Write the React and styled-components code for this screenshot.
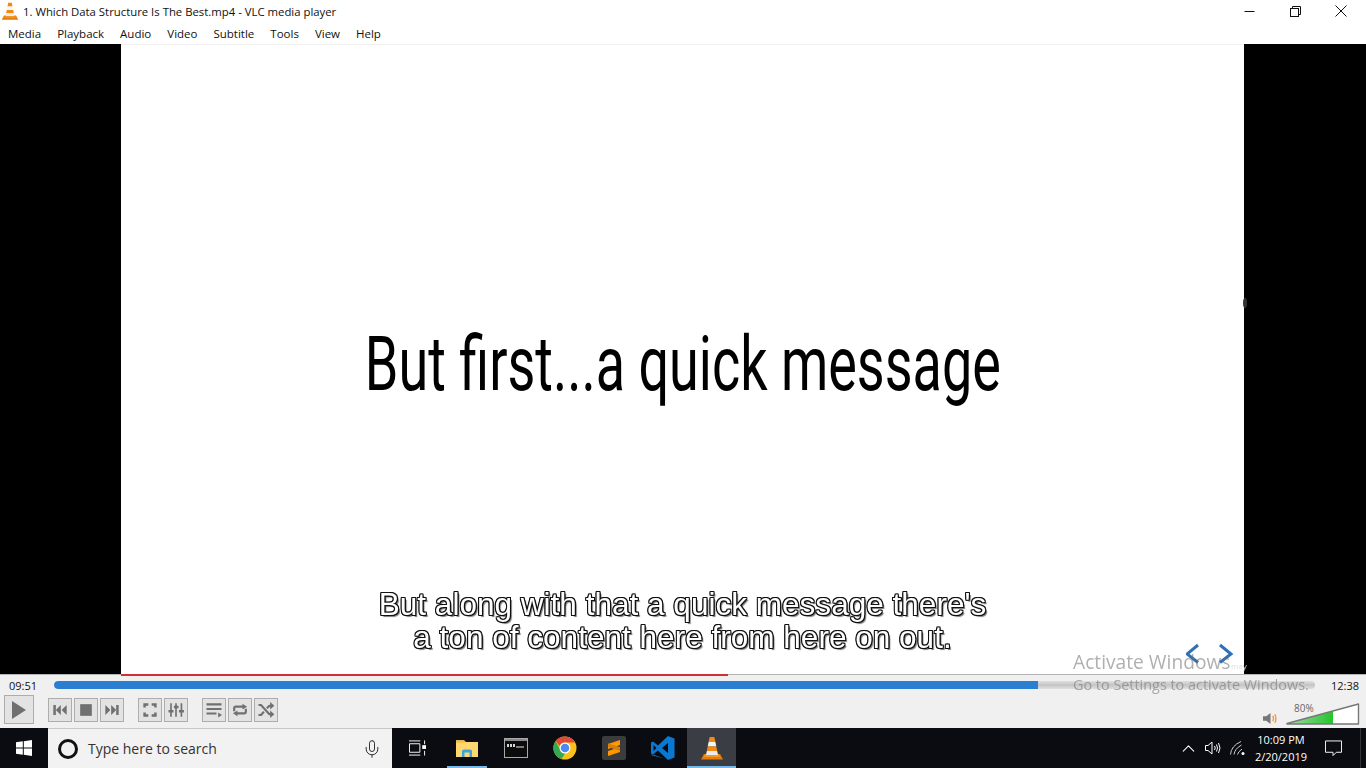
import React from 'react'
import styled, { createGlobalStyle } from 'styled-components'
import { ChevronUp, Mic } from 'lucide-react'

const UI_FONT = '"Open Sans", "Noto Sans", "Liberation Sans", sans-serif'

const GlobalStyle = createGlobalStyle`
  html, body {
    margin: 0;
    padding: 0;
    overflow: hidden;
    background: #000;
  }
  * {
    box-sizing: border-box;
  }
`

const menus = ['Media', 'Playback', 'Audio', 'Video', 'Subtitle', 'Tools', 'View', 'Help']

const Cone = ({ size = 16 }) => (
  <svg width={size} height={size} viewBox="0 0 24 24">
    <path d="M1 23.5 L4 18 H20 L23 23.5 Z" fill="#e57c0c" />
    <path d="M9.6 1 H14.4 L15.4 6 H8.6 Z" fill="#f08a10" />
    <path d="M8.6 6 H15.4 L16.3 10.5 H7.7 Z" fill="#f4f4f4" />
    <path d="M7.7 10.5 H16.3 L17.2 15 H6.8 Z" fill="#f08a10" />
    <path d="M6.8 15 H17.2 L18 19 H6 Z" fill="#ececec" />
    <path d="M5 19 H19 L20 21 H4 Z" fill="#f59a1e" />
  </svg>
)

const TopBars = () => (
  <>
    <TitleBar>
      <TitleIcon>
        <Cone size={18} />
      </TitleIcon>
      <TitleText>1. Which Data Structure Is The Best.mp4 - VLC media player</TitleText>
      <Captions>
        <CaptionButton>
          <svg width="11" height="11" viewBox="0 0 11 11">
            <path d="M0.5 5.5 H10.5" stroke="#111" fill="none" />
          </svg>
        </CaptionButton>
        <CaptionButton>
          <svg width="11" height="11" viewBox="0 0 11 11">
            <path d="M2.5 2.5 V0.5 H10.5 V8.5 H8.5" stroke="#111" fill="none" />
            <rect x="0.5" y="2.5" width="8" height="8" stroke="#111" fill="#fff" />
          </svg>
        </CaptionButton>
        <CaptionButton>
          <svg width="12" height="12" viewBox="0 0 12 12">
            <path d="M0.5 0.5 L11.5 11.5 M11.5 0.5 L0.5 11.5" stroke="#111" fill="none" />
          </svg>
        </CaptionButton>
      </Captions>
    </TitleBar>
    <MenuBar>
      {menus.map((m) => (
        <MenuItem key={m}>{m}</MenuItem>
      ))}
    </MenuBar>
  </>
)

const Video = () => (
  <VideoArea>
    <Frame>
      <Heading>
        <span>But first...a quick message</span>
      </Heading>
      <Subtitle>
        But along with that a quick message there's
        <br />
        a ton of content here from here on out.
      </Subtitle>
      <SlideArrows width="56" height="24" viewBox="0 0 56 24">
        <path d="M12 2 L1 11 L12 19.5" />
        <path d="M34 2 L45 11 L34 19.5" />
      </SlideArrows>
      <FaintLogo>may</FaintLogo>
      <EdgeNotch />
      <RedLine $to={607} />
    </Frame>
  </VideoArea>
)

const Stroked = styled.g`
  fill: none;
  stroke: #707070;
  stroke-width: 2.6;
`

const icons = {
  prev: <path d="M4 6 H7 V18 H4 Z M13 6 V18 L7 12 Z M20 6 V18 L14 12 Z" />,
  stop: <rect x="5" y="5" width="14" height="14" />,
  next: <path d="M20 6 H17 V18 H20 Z M11 6 V18 L17 12 Z M4 6 V18 L10 12 Z" />,
  full: (
    <path d="M4 4 H10 V7 H7 V9 H4 Z M20 4 H14 V7 H17 V9 H20 Z M4 20 H10 V17 H7 V15 H4 Z M20 20 H14 V17 H17 V15 H20 Z" />
  ),
  ext: (
    <path d="M5 4 H7 V12 H9 V15 H7 V20 H5 V15 H3 V12 H5 Z M11 4 H13 V7 H15 V10 H13 V20 H11 V10 H9.5 V7 H11 Z M17.5 4 H19.5 V12 H21.5 V15 H19.5 V20 H17.5 V15 H15.5 V12 H17.5 Z" />
  ),
  list: (
    <path d="M3 4 H21 V6.5 H3 Z M3 9.5 H21 V12 H3 Z M3 15 H15 V17.5 H3 Z M17 15 L21.5 18 L17 21 Z" />
  ),
  loop: (
    <>
      <Stroked>
        <path d="M5 13.5 V10 Q5 8 7 8 H16 M19 10.5 V14 Q19 16 17 16 H8" />
      </Stroked>
      <path d="M15 4.5 L20.5 8 L15 11.5 Z M9 12.5 L3.5 16 L9 19.5 Z" />
    </>
  ),
  random: (
    <>
      <Stroked>
        <path d="M3 6 H6 L16 17 H18 M3 18 H6 L9.5 14 M13 10 L16 7 H18" />
      </Stroked>
      <path d="M17 2.5 L22 7 L17 11.5 Z M17 12.5 L22 17 L17 21.5 Z" />
    </>
  ),
}

const Control = ({ icon }) => (
  <SmallButton>
    <svg width="20" height="20" viewBox="0 0 24 24">
      {icons[icon]}
    </svg>
  </SmallButton>
)

const Controls = () => (
  <ControlPanel>
    <SeekRow>
      <Time>09:51</Time>
      <SeekTrack>
        <SeekFill $pct={78.05} />
      </SeekTrack>
      <EndTime>12:38</EndTime>
    </SeekRow>
    <ButtonRow>
      <PlayButton>
        <svg width="18" height="20" viewBox="0 0 18 20">
          <path d="M2 1 L16 10 L2 19 Z" />
        </svg>
      </PlayButton>
      <ButtonGroup>
        <Control icon="prev" />
        <Control icon="stop" />
        <Control icon="next" />
      </ButtonGroup>
      <ButtonGroup>
        <Control icon="full" />
        <Control icon="ext" />
      </ButtonGroup>
      <ButtonGroup>
        <Control icon="list" />
        <Control icon="loop" />
        <Control icon="random" />
      </ButtonGroup>
      <Volume>
        <svg width="14" height="13" viewBox="0 0 13 12">
          <path d="M0 4 H3 L7 1 V11 L3 8 H0 Z" fill="#777" />
          <path d="M9 3.5 Q10.5 6 9 8.5 M11 2 Q13 6 11 10" stroke="#f0932b" fill="none" strokeWidth="1.2" />
        </svg>
        <VolumeMeter>
          <VolumeLabel>80%</VolumeLabel>
          <svg width="74" height="22" viewBox="0 0 74 22">
            <defs>
              <linearGradient id="vol" x1="0" x2="1" y1="0" y2="0">
                <stop offset="0" stopColor="#a6dca8" />
                <stop offset="1" stopColor="#22c52c" />
              </linearGradient>
            </defs>
            <path d="M1 20.5 L72.5 1 V21 H1 Z" fill="#fff" />
            <path d="M1 20.5 L47 8.2 V21 H1 Z" fill="url(#vol)" />
            <path d="M1 20.5 L72.5 1 V21 H1 Z" fill="none" stroke="#777" strokeWidth="1.4" strokeLinejoin="round" />
          </svg>
        </VolumeMeter>
      </Volume>
    </ButtonRow>
  </ControlPanel>
)

const FolderIcon = () => (
  <svg width="22" height="22" viewBox="0 0 22 22">
    <path d="M0 3 H8 L10 5 H0 Z" fill="#e3b34c" />
    <rect x="0" y="5" width="22" height="15" fill="#ffd76e" />
    <rect x="0" y="4.4" width="9" height="1.6" fill="#f6c654" />
    <path d="M6 20 V14 Q6 12.5 8 12.5 H14 Q16 12.5 16 14 V20 H13.5 V15.5 H8.5 V20 Z" fill="#3aa6e0" />
  </svg>
)

const ConsoleIcon = () => (
  <svg width="24" height="20" viewBox="0 0 24 20">
    <rect x="0.5" y="0.5" width="23" height="19" fill="#0c0c0c" stroke="#a9a9a9" />
    <rect x="1" y="1" width="22" height="2" fill="#8c8c8c" />
    <path d="M3 6 H5 V9 H3 Z M6 6 H8 V9 H6 Z M9 6 H11 V9 H9 Z" fill="#d4d4d4" />
    <rect x="12" y="8.5" width="8" height="1" fill="#e6e6e6" />
  </svg>
)

const ChromeIcon = () => (
  <svg width="24" height="24" viewBox="0 0 48 48">
    <circle cx="24" cy="24" r="23" fill="#fbc117" />
    <path d="M24 1 A23 23 0 0 1 44 13 L24 13 A11 11 0 0 0 13.5 20 L5 10 A23 23 0 0 1 24 1 Z" fill="#dd4b3e" />
    <path d="M5 10 L15 28 A11 11 0 0 0 24 35 L17 46 A23 23 0 0 1 5 10 Z" fill="#35a853" />
    <circle cx="24" cy="24" r="11" fill="#fff" />
    <circle cx="24" cy="24" r="8.5" fill="#4a8af4" />
  </svg>
)

const SublimeIcon = () => (
  <SublimeTile>
    <svg width="14" height="18" viewBox="0 0 14 18">
      <path d="M13 1 V6 L1 10 V5 Z M1 12 V17 L13 13 V8 Z" fill="#ff9800" />
      <path d="M1 8 L13 12 V8 L1 4.5 Z" fill="#d97f00" />
    </svg>
  </SublimeTile>
)

const CodeIcon = () => (
  <svg width="25" height="26" viewBox="0 0 25 26">
    <path
      fillRule="evenodd"
      d="M18 1 L24.5 3.5 V22.5 L18 25 L8 15.5 L3 19.5 L1 18.5 V7.5 L3 6.5 L8 10.5 Z M18 8 L12 13 L18 18 Z M3.5 10 V16 L6.5 13 Z"
      fill="#0a78d1"
    />
    <path d="M0.5 20 L3 19.5 L18 25 L14 23.5 Z" fill="#0a78d1" />
  </svg>
)

const Taskbar = () => (
  <TaskbarRoot>
    <StartButton>
      <svg width="16" height="16" viewBox="0 0 16 16">
        <path d="M0 2.3 L6.8 1.3 V7.5 H0 Z M7.8 1.2 L16 0 V7.5 H7.8 Z M0 8.5 H6.8 V14.7 L0 13.7 Z M7.8 8.5 H16 V16 L7.8 14.8 Z" fill="#fff" />
      </svg>
    </StartButton>
    <SearchBox>
      <CortanaRing />
      <SearchText>Type here to search</SearchText>
      <MicSlot>
        <Mic size={20} strokeWidth={1.1} color="#222" />
      </MicSlot>
    </SearchBox>
    <TaskView>
      <svg width="17" height="16" viewBox="0 0 18 16">
        <path d="M0.5 3.5 H11.5 V12.5 H0.5 Z M0 0.5 H12 M0 15.5 H12 M16.5 0 V4 M16.5 11 V16" stroke="#fff" fill="none" />
        <rect x="14" y="5" width="4" height="4" fill="#fff" />
      </svg>
    </TaskView>
    <TaskApp $running>
      <FolderIcon />
    </TaskApp>
    <TaskApp>
      <ConsoleIcon />
    </TaskApp>
    <TaskApp>
      <ChromeIcon />
    </TaskApp>
    <TaskApp>
      <SublimeIcon />
    </TaskApp>
    <TaskApp>
      <CodeIcon />
    </TaskApp>
    <TaskApp $running $active>
      <Cone size={24} />
    </TaskApp>
    <Tray>
      <TrayIcon $w={26}>
        <ChevronUp size={21} strokeWidth={1.2} color="#fff" />
      </TrayIcon>
      <TrayIcon $w={24}>
        <svg width="16" height="14" viewBox="0 0 16 14">
          <path
            d="M0.5 4.5 H3 L7 1 V13 L3 9.5 H0.5 Z M9.5 5 Q11 7 9.5 9 M11.5 3.5 Q13.5 7 11.5 10.5 M13.5 2 Q16.5 7 13.5 12"
            stroke="#fff"
            fill="none"
          />
        </svg>
      </TrayIcon>
      <TrayIcon $w={26}>
        <svg width="16" height="14" viewBox="0 0 16 14">
          <path d="M0.5 13.5 Q1 5 11 0.5 M4 13.5 Q4.5 8 11.5 4 M7.5 13.5 Q8 11 12 8" stroke="#ccc" fill="none" />
          <circle cx="13" cy="12.5" r="1.5" fill="#fff" />
        </svg>
      </TrayIcon>
      <Clock>
        <div>10:09 PM</div>
        <div>2/20/2019</div>
      </Clock>
      <TrayIcon $w={44}>
        <svg width="17" height="17" viewBox="0 0 18 17">
          <path d="M0.5 0.5 H17.5 V12.5 H12 L8.5 16 V12.5 H0.5 Z" stroke="#fff" fill="none" />
        </svg>
      </TrayIcon>
    </Tray>
  </TaskbarRoot>
)

export default function App() {
  return (
    <>
      <GlobalStyle />
      <Player>
        <TopBars />
        <Video />
        <Controls />
        <Taskbar />
        <Watermark>
          <WatermarkTitle>Activate Windows</WatermarkTitle>
          <WatermarkSub>Go to Settings to activate Windows.</WatermarkSub>
        </Watermark>
      </Player>
    </>
  )
}

const Player = styled.div`
  position: relative;
  width: 1366px;
  height: 768px;
  display: flex;
  flex-direction: column;
  overflow: hidden;
  font-family: ${UI_FONT};
`

const TitleBar = styled.div`
  height: 22px;
  background: #fff;
  display: flex;
  align-items: center;
  color: #111;
`

const TitleIcon = styled.div`
  width: 23px;
  padding-left: 1px;
  display: flex;
  align-items: center;
`

const TitleText = styled.div`
  font-size: 11.35px;
  white-space: nowrap;
`

const Captions = styled.div`
  margin-left: auto;
  padding-right: 2px;
  display: flex;
`

const CaptionButton = styled.div`
  width: 46px;
  height: 22px;
  display: flex;
  align-items: center;
  justify-content: center;
`

const MenuBar = styled.div`
  height: 22px;
  background: #fff;
  display: flex;
  align-items: center;
`

const MenuItem = styled.div`
  padding: 0 8px;
  font-size: 11.5px;
  color: #111;
`

const VideoArea = styled.div`
  height: 630px;
  background: #000;
  display: flex;
  justify-content: center;
`

const Frame = styled.div`
  position: relative;
  z-index: 1;
  width: 1123px;
  background: #fff;
  border-top: 1px solid #f0f0f0;
  display: flex;
  align-items: center;
  justify-content: center;
  margin-left: -1px;
`

const Heading = styled.div`
  font-family: Roboto, "Liberation Sans", sans-serif;
  font-weight: 400;
  font-size: 76px;
  line-height: 1;
  color: #000;
  white-space: nowrap;
  margin-top: 9px;

  span {
    display: inline-block;
    transform: scaleX(0.71);
    transform-origin: center;
  }
`

const Subtitle = styled.div`
  position: absolute;
  left: 0;
  right: 0;
  top: 543px;
  text-align: center;
  font-family: "Liberation Sans", Arial, sans-serif;
  font-size: 31.55px;
  line-height: 33px;
  color: #fff;
  will-change: transform;
  text-shadow:
    -1px -1px 0 #111, 1px -1px 0 #111, -1px 1px 0 #111, 1px 1px 0 #111,
    -1px 0 0 #111, 1px 0 0 #111, 0 -1px 0 #111, 0 1px 0 #111,
    2px 2px 1px #777;
`

const SlideArrows = styled.svg`
  position: absolute;
  left: 1065px;
  top: 598px;

  path {
    fill: none;
    stroke: #2f70b7;
    stroke-width: 3;
  }
`

const FaintLogo = styled.div`
  position: absolute;
  left: 1110px;
  top: 615px;
  font-size: 8px;
  color: #dcdcdc;
`

const EdgeNotch = styled.div`
  position: absolute;
  right: -3px;
  top: 253px;
  width: 4px;
  height: 10px;
  border-radius: 50%;
  background: #333;
`

const RedLine = styled.div`
  position: absolute;
  left: 0;
  bottom: -2px;
  width: ${(p) => p.$to}px;
  height: 2px;
  background: #d03030;
`

const ControlPanel = styled.div`
  height: 54px;
  background: #f0f0f0;
  border-top: 1px solid #b4b4b4;
  display: flex;
  flex-direction: column;
`

const SeekRow = styled.div`
  height: 20px;
  display: flex;
  align-items: center;
  padding: 0 0 0 9px;
  font-size: 11px;
  color: #111;
`

const Time = styled.div`
  width: 45px;
`

const EndTime = styled.div`
  margin-left: 16px;
  width: 30px;
`

const SeekTrack = styled.div`
  width: 1261px;
  height: 8px;
  border-radius: 4px;
  background: linear-gradient(#e0e0e0, #c4c4c4 50%, #e0e0e0);
  overflow: hidden;
`

const SeekFill = styled.div`
  width: ${(p) => p.$pct}%;
  height: 100%;
  border-radius: 4px 0 0 4px;
  background: #2a7fd2;
`

const ButtonRow = styled.div`
  flex: 1;
  display: flex;
  align-items: flex-start;
  padding-left: 4px;
`

const PlayButton = styled.div`
  width: 30px;
  height: 29px;
  margin-right: 14px;
  border: 1px solid #adadad;
  background: #e3e3e3;
  display: flex;
  align-items: center;
  justify-content: center;

  svg {
    fill: #707070;
  }
`

const ButtonGroup = styled.div`
  display: flex;
  gap: 2px;
  margin: 3px 14px 0 0;
`

const SmallButton = styled.div`
  width: 24px;
  height: 24px;
  border: 1px solid #adadad;
  background: #e3e3e3;
  display: flex;
  align-items: center;
  justify-content: center;

  svg {
    fill: #707070;
  }
`

const Volume = styled.div`
  margin-left: auto;
  padding-right: 6px;
  height: 100%;
  display: flex;
  align-items: flex-end;
  gap: 9px;
  padding-bottom: 3px;
`

const VolumeMeter = styled.div`
  position: relative;
  width: 74px;
  height: 22px;
`

const VolumeLabel = styled.div`
  position: absolute;
  left: 8px;
  top: -2px;
  font-size: 10px;
  color: #666;
`

const TaskbarRoot = styled.div`
  height: 40px;
  background: #0a0c11;
  display: flex;
  align-items: stretch;
`

const StartButton = styled.div`
  width: 48px;
  display: flex;
  align-items: center;
  justify-content: center;
`

const SearchBox = styled.div`
  width: 344px;
  background: #f2f2f2;
  border-top: 1px solid #c8c8c8;
  display: flex;
  align-items: center;
  padding-left: 10px;
`

const CortanaRing = styled.div`
  width: 20px;
  height: 20px;
  border-radius: 50%;
  border: 3px solid #111;
  margin-right: 10px;
`

const SearchText = styled.div`
  font-size: 14px;
  color: #333;
`

const MicSlot = styled.div`
  margin-left: auto;
  width: 40px;
  display: flex;
  justify-content: center;
`

const TaskView = styled.div`
  width: 50px;
  display: flex;
  align-items: center;
  justify-content: center;
`

const TaskApp = styled.div`
  position: relative;
  width: 49px;
  display: flex;
  align-items: center;
  justify-content: center;
  background: ${(p) => (p.$active ? '#3a3d43' : 'transparent')};

  &::after {
    content: '';
    display: ${(p) => (p.$running ? 'block' : 'none')};
    position: absolute;
    bottom: 0;
    left: ${(p) => (p.$active ? '0' : '5px')};
    right: ${(p) => (p.$active ? '0' : '4px')};
    height: 2px;
    background: #76b9ed;
  }
`

const SublimeTile = styled.div`
  width: 24px;
  height: 24px;
  border-radius: 2px;
  background: #3c3c3c;
  display: flex;
  align-items: center;
  justify-content: center;
`

const Tray = styled.div`
  margin-left: auto;
  margin-right: 5px;
  display: flex;
  align-items: stretch;
  padding-right: 5px;
  border-right: 1px solid #333;
`

const TrayIcon = styled.div`
  width: ${(p) => p.$w}px;
  display: flex;
  align-items: center;
  justify-content: center;
`

const Clock = styled.div`
  width: 60px;
  display: flex;
  flex-direction: column;
  justify-content: center;
  align-items: center;
  gap: 3px;
  font-size: 11px;
  line-height: 14px;
  color: #fff;
`

const Watermark = styled.div`
  position: absolute;
  z-index: 2;
  left: 1073px;
  top: 649px;
  pointer-events: none;
  white-space: nowrap;
  color: rgba(110, 110, 110, 0.55);
`

const WatermarkTitle = styled.div`
  font-size: 19.2px;
  line-height: 26px;
`

const WatermarkSub = styled.div`
  font-size: 14.4px;
  line-height: 18px;
  margin-top: 1px;
`
